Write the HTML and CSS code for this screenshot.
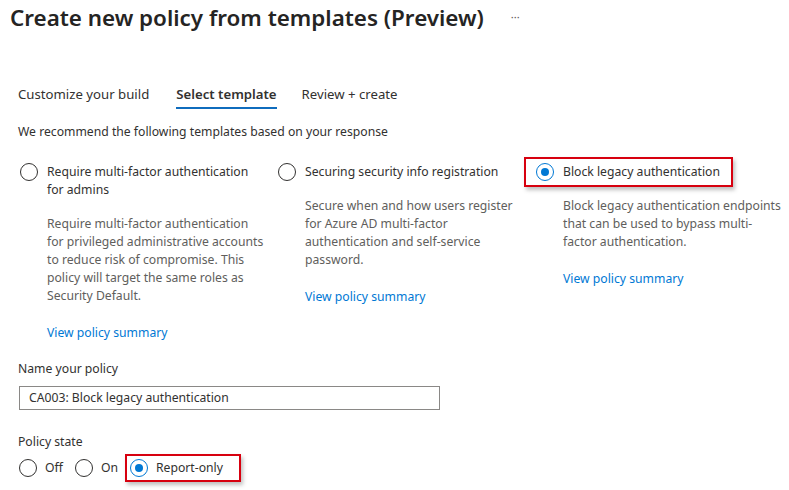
FILE: index.html
```
<!DOCTYPE html>
<html lang="en">
<head>
    <meta charset="UTF-8">
    <meta name="viewport" content="width=device-width, initial-scale=1.0">
    <title>Create new policy from templates (Preview)</title>
    <link rel="stylesheet" href="styles.css">
</head>
<body>
    <div class="page">
        <div class="page-header">
            <h1>Create new policy from templates (Preview)</h1>
            <span class="more">···</span>
        </div>

        <nav class="tabs">
            <a class="tab">Customize your build</a>
            <a class="tab active">Select template</a>
            <a class="tab">Review + create</a>
        </nav>

        <p class="intro">We recommend the following templates based on your response</p>

        <div class="templates">
            <div class="template">
                <label class="choice">
                    <span class="radio"></span>
                    <span class="choice-label">Require multi-factor authentication for admins</span>
                </label>
                <p class="desc">Require multi-factor authentication for privileged administrative accounts to reduce risk of compromise. This policy will target the same roles as Security Default.</p>
                <a class="link">View policy summary</a>
            </div>

            <div class="template">
                <label class="choice">
                    <span class="radio"></span>
                    <span class="choice-label">Securing security info registration</span>
                </label>
                <p class="desc">Secure when and how users register for Azure AD multi-factor authentication and self-service password.</p>
                <a class="link">View policy summary</a>
            </div>

            <div class="template">
                <label class="choice highlight">
                    <span class="radio checked"></span>
                    <span class="choice-label">Block legacy authentication</span>
                </label>
                <p class="desc">Block legacy authentication endpoints that can be used to bypass multi-factor authentication.</p>
                <a class="link">View policy summary</a>
            </div>
        </div>

        <div class="field">
            <label class="field-label">Name your policy</label>
            <div class="text-input">CA003: Block legacy authentication</div>
        </div>

        <div class="field state">
            <label class="field-label">Policy state</label>
            <div class="state-options">
                <label class="choice">
                    <span class="radio"></span>
                    <span class="choice-label">Off</span>
                </label>
                <label class="choice">
                    <span class="radio"></span>
                    <span class="choice-label">On</span>
                </label>
                <label class="choice highlight-small">
                    <span class="radio checked"></span>
                    <span class="choice-label">Report-only</span>
                </label>
            </div>
        </div>
    </div>
</body>
</html>
```

FILE: styles.css
```
* {
    margin: 0;
    padding: 0;
    box-sizing: border-box;
}

body {
    font-family: 'Noto Sans', 'Open Sans', Arial, sans-serif;
    font-size: 12.2px;
    color: #323130;
    background: white;
}

.page {
    padding: 0 18px 30px;
}

.page-header {
    display: flex;
    align-items: center;
    height: 34px;
    margin-left: -8px;
}

.page-header h1 {
    font-size: 22.4px;
    font-weight: 600;
    color: #252423;
}

.more {
    margin-left: 27px;
    font-size: 11px;
    color: #605e5c;
    margin-top: -2px;
}

.tabs {
    display: flex;
    gap: 27px;
    margin-top: 51px;
}

.tab {
    font-size: 13.2px;
    line-height: 18px;
    color: #323130;
    padding-bottom: 4px;
    border-bottom: 2px solid transparent;
}

.tab.active {
    font-weight: 600;
    border-bottom-color: #0f6cbd;
}

.tab:last-child {
    margin-left: -2px;
}

.intro {
    margin-top: 14px;
    line-height: 18px;
}

.templates {
    display: grid;
    grid-template-columns: 258px 258px 258px;
    margin-top: 22px;
    margin-left: 2px;
}

.template {
    padding-right: 11px;
}

.choice {
    display: flex;
    align-items: flex-start;
    gap: 9px;
    line-height: 18px;
}

.radio {
    flex: none;
    width: 18px;
    height: 18px;
    border: 1px solid #323130;
    border-radius: 50%;
    position: relative;
}

.radio.checked {
    border-color: #0078d4;
}

.radio.checked::after {
    content: '';
    position: absolute;
    left: 4px;
    top: 4px;
    width: 8px;
    height: 8px;
    border-radius: 50%;
    background: #0078d4;
}

.highlight {
    border: 2px solid #d7000f;
    box-shadow: 2px 3px 4px rgba(0,0,0,0.25);
    padding: 4px 11px 4px 10px;
    margin: -6px 0 -6px -12px;
    width: fit-content;
}

.desc {
    margin-top: 16px;
    margin-left: 27px;
    line-height: 18px;
    color: #605e5c;
}

.link {
    display: block;
    margin-top: 19px;
    margin-left: 27px;
    color: #0078d4;
    line-height: 18px;
}

.field {
    margin-top: 18px;
}

.field.state {
    margin-top: 23px;
}

.field-label {
    display: block;
    line-height: 18px;
}

.text-input {
    margin-top: 8px;
    margin-left: 1px;
    width: 421px;
    height: 24px;
    padding: 0 9px;
    border: 1px solid #8a8886;
    line-height: 22px;
}

.state-options {
    display: flex;
    gap: 12px;
    margin-top: 8px;
    margin-left: 1px;
}

.state-options .choice {
    gap: 8px;
}

.highlight-small {
    border: 2px solid #d7000f;
    box-shadow: 2px 3px 4px rgba(0,0,0,0.25);
    padding: 3px 16px 3px 3px;
    margin: -5px 0 -5px -5px;
}
```
